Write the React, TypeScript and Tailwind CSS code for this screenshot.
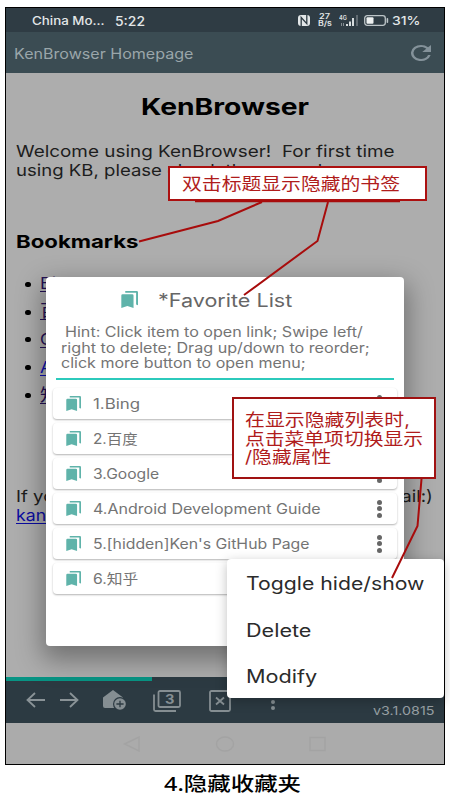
import { useLayoutEffect, useRef, useState } from "react";

/** Single line of text stretched horizontally to an exact width. */
function Fit({ text, width, className = "", underline = false }: { text: string; width: number; className?: string; underline?: boolean }) {
  const ref = useRef<HTMLSpanElement>(null);
  const [scale, setScale] = useState(1);
  useLayoutEffect(() => {
    if (ref.current) setScale(width / ref.current.offsetWidth);
  }, [width, text]);
  return (
    <span className={`block shrink-0 text-left ${className}`} style={{ width }}>
      <span
        ref={ref}
        className={`inline-block origin-left whitespace-pre align-top ${underline ? "underline underline-offset-2" : ""}`}
        style={{ transform: `scaleX(${scale})` }}
      >
        {text}
      </span>
    </span>
  );
}

function BookmarksIcon({ className }: { className: string }) {
  return (
    <svg viewBox="0 0 16 16" preserveAspectRatio="none" className={className} fill="#5fb3aa">
      <path d="M0.3 4.2Q0.3 3 1.5 3H10.6Q11.8 3 11.8 4.2V16L6 14L0.3 16Z" />
      <path d="M4 0H14.8Q16 0 16 1.2V13.4L14.2 12.8V1.6H4Z" />
    </svg>
  );
}

function StatusBar() {
  return (
    <div className="flex h-6 items-center bg-[#2f3c44] pl-[26px] text-[#e3e7e8] leading-4">
      <Fit text="China Mo..." width={73} className="text-[11.5px] font-medium mt-0.5" />
      <Fit text="5:22" width={30} className="ml-[10px] mt-0.5 text-[13px] font-medium" />
      <svg viewBox="0 0 12 11" className="ml-[153px] mt-[1px] h-[11px] w-3" fill="none" stroke="#e3e7e8">
        <rect x="0" y="0" width="12" height="11" rx="3" fill="#e3e7e8" stroke="none" />
        <path d="M3.2 11V2.5L8.8 8.6V0" stroke="#2f3c44" strokeWidth="1.3" />
      </svg>
      <div className="ml-[7px] flex w-[15px] flex-col items-center text-[7.5px] leading-[7px] font-semibold">
        <Fit text="27" width={11} />
        <Fit text="B/s" width={14} />
      </div>
      <svg viewBox="0 0 20 11" className="ml-[7px] mt-[1px] h-[11px] w-5" fill="#d7dcde">
        <text x="0" y="4.5" fontSize="5.5" fontWeight="700" fontFamily="Inter, sans-serif">4G</text>
        <rect x="2" y="8" width="1" height="3" opacity=".5" />
        <rect x="4" y="8" width="1" height="3" opacity=".5" />
        <rect x="7" y="9" width="2" height="2" />
        <rect x="10" y="6.5" width="2" height="4.5" />
        <rect x="13" y="3" width="2" height="8" />
        <rect x="17" y="0" width="2" height="11" opacity=".3" />
      </svg>
      <svg viewBox="0 0 25 11" className="ml-[5px] mt-[1px] h-[11px] w-[25px]">
        <rect x=".7" y=".7" width="20.6" height="9.6" rx="2.5" fill="none" stroke="#bcc4c7" strokeWidth="1.3" />
        <rect x="2.5" y="2.3" width="7" height="6.4" rx="1" fill="#edf0f0" />
        <rect x="22.6" y="3" width="1.6" height="5" rx=".8" fill="#bcc4c7" />
      </svg>
      <Fit text="31%" width={28} className="ml-[3px] mt-0.5 text-xs font-medium" />
    </div>
  );
}

function AppBar() {
  return (
    <div className="flex h-[41px] items-center justify-between bg-[#3b4c53] pl-2 pr-[13px]">
      <Fit text="KenBrowser Homepage" width={179} className="mt-[3px] text-sm leading-5 text-[#9aa6aa]" />
      <svg viewBox="4 4 16 16" preserveAspectRatio="none" className="h-4 w-[20px]" fill="#84929a">
        <path d="M17.65 6.35A7.96 7.96 0 0 0 12 4a8 8 0 1 0 7.73 10h-2.08A6 6 0 1 1 12 6c1.66 0 3.14.69 4.22 1.78L13 11h7V4z" />
      </svg>
    </div>
  );
}

const links = [
  { text: "Bing", width: 38, color: "text-[#241055]" },
  { text: "百度", width: 38, color: "text-[#241055]" },
  { text: "Google", width: 58, color: "text-[#241055]" },
  { text: "Android", width: 66, color: "text-[#0e0eb0]" },
  { text: "知乎", width: 38, color: "text-[#241055]" },
];

function HomePage() {
  return (
    <div className="flex h-[604px] flex-col overflow-hidden bg-[#adadad] pl-[10px] text-[16.5px] leading-[19px] text-[#1d1d1d]">
      <div className="mt-[22px] flex pl-[125px]">
        <Fit text="KenBrowser" width={168} className="text-[23px] leading-6 font-bold text-black" />
      </div>
      <div className="mt-[23px]">
        <Fit text="Welcome using KenBrowser!  For first time" width={379} />
        <Fit text="using KB, please check the manual" width={306} />
      </div>
      <Fit text="Bookmarks" width={122} className="mt-[52px] text-[18px] leading-5 font-bold text-black" />
      <ul className="mt-[18px]">
        {links.map((l) => (
          <li key={l.text} className="flex h-[27.8px] items-center pl-[9px]">
            <span className="mt-px h-[5px] w-1.5 rounded-full bg-black" />
            <Fit text={l.text} width={l.width} underline className={`ml-[9px] ${l.color}`} />
          </li>
        ))}
      </ul>
      <div className="mt-[78px]">
        <Fit text="If you have any question, please send me mail:)" width={417} />
        <Fit text="kan" width={30} underline className="text-[#0b0ba0]" />
      </div>
    </div>
  );
}

function ToolBar() {
  return (
    <div className="bg-[#2c3a42]">
      <div className="h-1 w-[146px] bg-[#089484]" />
      <div className="flex h-[42px] items-center pl-5">
        <svg viewBox="0 0 19 16" className="h-4 w-[19px] -mt-1" fill="none" stroke="#8a9397" strokeWidth="1.8">
          <path d="M19 8H1.5M9 1L1.5 8L9 15" />
        </svg>
        <svg viewBox="0 0 19 16" className="ml-[15px] -mt-1 h-4 w-[19px]" fill="none" stroke="#8a9397" strokeWidth="1.8">
          <path d="M0 8H17.5M10 1L17.5 8L10 15" />
        </svg>
        <svg viewBox="0 0 24 20" className="ml-6 -mt-1 h-5 w-6">
          <path d="M0 7.5L10 0L20 7.5V18H2Q0 18 0 16Z" fill="#858e92" />
          <circle cx="17" cy="14" r="7" fill="#2c3a42" />
          <circle cx="17" cy="14" r="5.8" fill="#858e92" />
          <path d="M17 10.8V17.2M13.4 14H20.6" stroke="#2c3a42" strokeWidth="1.3" />
        </svg>
        <div className="relative ml-[26px] -mt-[3px] h-[22px] w-7">
          <svg viewBox="0 0 28 22" className="h-[22px] w-7" fill="none" stroke="#858e92" strokeWidth="1.8">
            <rect x="5.5" y="1" width="21.5" height="16" rx="1.5" />
            <path d="M1 4.5V19.5Q1 21 2.5 21H23" />
          </svg>
          <span className="absolute left-3 top-[2px] text-[13px] leading-[14px] font-bold text-[#858e92]">
            <Fit text="3" width={9} />
          </span>
        </div>
        <svg viewBox="0 0 22 22" className="ml-7 -mt-[3px] size-[22px]" fill="none" stroke="#858e92" strokeWidth="1.8">
          <rect x="1" y="1" width="20" height="20" rx="1.5" />
          <path d="M7 7.5L15 14.5M15 7.5L7 14.5" />
        </svg>
        <div className="ml-10 -mt-px flex flex-col gap-0.5">
          <span className="size-1 rounded-full bg-[#858e92]" />
          <span className="size-1 rounded-full bg-[#858e92]" />
          <span className="size-1 rounded-full bg-[#858e92]" />
        </div>
        <Fit text="v3.1.0815" width={62} className="ml-[98px] mt-[17px] text-xs leading-4 text-[#98a0a4]" />
      </div>
    </div>
  );
}

function NavBar() {
  return (
    <div className="flex h-[41px] items-center bg-[#ababab] pl-[117px]">
      <svg viewBox="0 0 203 16" className="h-4 w-[203px]" fill="none" stroke="#a3a3a3" strokeWidth="1.4">
        <path d="M1.5 8L16 1V15Z" />
        <ellipse cx="102" cy="8" rx="8.5" ry="7" />
        <rect x="187" y="1.5" width="15" height="13" />
      </svg>
    </div>
  );
}

const favorites = [
  { text: "1.Bing", width: 47 },
  { text: "2.百度", width: 45 },
  { text: "3.Google", width: 66 },
  { text: "4.Android Development Guide", width: 228 },
  { text: "5.[hidden]Ken's GitHub Page", width: 217 },
  { text: "6.知乎", width: 45 },
];

function FavoriteDialog() {
  return (
    <div className="absolute left-[46px] top-[277px] h-[369px] w-[358px] rounded bg-white text-sm leading-[15.5px] text-[#747474] shadow-[0_10px_26px_4px_rgba(0,0,0,0.35)]">
      <div className="flex items-center pl-[75px] pt-[14px]">
        <BookmarksIcon className="-mt-[3px] h-[17px] w-[17px]" />
        <Fit text="*Favorite List" width={134} className="ml-5 text-[18px] leading-5 text-[#666]" />
      </div>
      <div className="pl-[15px] pt-[13px]">
        <Fit text="Hint: Click item to open link; Swipe left/" width={298} className="ml-1" />
        <Fit text="right to delete; Drag up/down to reorder;" width={309} />
        <Fit text="click more button to open menu;" width={245} />
      </div>
      <div className="mx-[10px] mt-[7px] h-[2.5px] bg-[#2ccabc]" />
      <ul className="mx-[7px] mt-2 flex flex-col gap-1">
        {favorites.map((f) => (
          <li key={f.text} className="flex h-[31px] items-center rounded-sm bg-white pl-[13px] pr-[15px] shadow-[0_1px_2px_rgba(0,0,0,0.3)]">
            <BookmarksIcon className="h-[15px] w-[15px]" />
            <Fit text={f.text} width={f.width} className="ml-3 mt-px leading-5" />
            <span className="ml-auto flex flex-col gap-[1.5px]">
              <span className="size-[5px] rounded-full bg-[#666]" />
              <span className="size-[5px] rounded-full bg-[#666]" />
              <span className="size-[5px] rounded-full bg-[#666]" />
            </span>
          </li>
        ))}
      </ul>
    </div>
  );
}

function PopupMenu() {
  return (
    <div className="absolute left-[227px] top-[559px] flex h-[139px] w-[217px] flex-col rounded-sm bg-white pl-[19px] text-[18px] leading-[46.5px] text-[#2b2b2b] shadow-[0_3px_12px_rgba(0,0,0,0.25)]">
      <Fit text="Toggle hide/show" width={178} className="mt-0.5" />
      <Fit text="Delete" width={66} />
      <Fit text="Modify" width={71} />
    </div>
  );
}

function Annotations() {
  return (
    <>
      <div className="absolute left-[168px] top-[166px] flex h-[35px] w-[259px] items-center border-2 border-[#ac1010] bg-white pl-3 text-[#b01c1c]">
        <Fit text="双击标题显示隐藏的书签" width={218} className="text-[17px] leading-5" />
      </div>
      <div className="absolute left-[232px] top-[397px] h-[82px] w-[204px] border-2 border-[#a01212] bg-white pl-[11px] pt-3 text-[17px] leading-[18.7px] text-[#b01c1c]">
        <Fit text="在显示隐藏列表时," width={165} />
        <Fit text="点击菜单项切换显示" width={178} />
        <Fit text="/隐藏属性" width={86} />
      </div>
      <svg viewBox="0 0 450 800" className="pointer-events-none absolute left-0 top-0 h-[800px] w-[450px]" fill="none" stroke="#a80c0c" strokeWidth="2">
        <path d="M139 241.5L218 221L262 202" />
        <path d="M328 202L317.5 241L244 295" />
        <path d="M421.5 479L417.5 526L392 578" />
        <path d="M195 201.2H400" />
      </svg>
    </>
  );
}

export default function App() {
  return (
    <div className="relative h-[800px] w-[450px] overflow-hidden bg-white pl-[5px] pt-[7px] font-['Inter','Noto_Sans_CJK_SC',sans-serif]">
      <div className="w-[440px] border border-black">
        <StatusBar />
        <AppBar />
        <HomePage />
        <ToolBar />
        <NavBar />
      </div>
      <div className="mt-[7px] flex pl-[159px]">
        <Fit text="4.隐藏收藏夹" width={137} className="font-['Noto_Sans','Noto_Sans_CJK_SC',sans-serif] text-[19px] leading-6 font-medium text-black" />
      </div>
      <FavoriteDialog />
      <PopupMenu />
      <Annotations />
    </div>
  );
}
